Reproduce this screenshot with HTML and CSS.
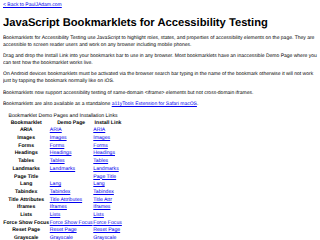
FILE: index.html
```html
<!DOCTYPE html>
<html lang="en">
<head>
<meta charset="utf-8">
<title>JavaScript Bookmarklets for Accessibility Testing</title>
<link rel="stylesheet" href="styles.css">
</head>
<body>
<div class="back"><a href="#">&lt; Back to PaulJAdam.com</a></div>
<h1>JavaScript Bookmarklets for Accessibility Testing</h1>
<p>Bookmarklets for Accessibility Testing use JavaScript to highlight roles, states, and properties of accessibility elements on the page. They are accessible to screen reader users and work on any browser including mobile phones.</p>
<p>Drag and drop the Install Link into your bookmarks bar to use in any browser. Most bookmarklets have an inaccessible Demo Page where you can test how the bookmarklet works live.</p>
<p>On Android devices bookmarklets must be activated via the browser search bar typing in the name of the bookmark otherwise it will not work just by tapping the bookmark normally like on iOS.</p>
<p>Bookmarklets now support accessibility testing of same-domain &lt;iframe&gt; elements but not cross-domain iframes.</p>
<p>Bookmarklets are also available as a standalone <a href="#">a11yTools Extension for Safari macOS</a>.</p>
<table class="links">
<caption>Bookmarklet Demo Pages and Installation Links</caption>
<thead>
<tr><th>Bookmarklet</th><th>Demo Page</th><th>Install Link</th></tr>
</thead>
<tbody>
<tr><th>ARIA</th><td><a href="#">ARIA</a></td><td><a href="#">ARIA</a></td></tr>
<tr><th>Images</th><td><a href="#">Images</a></td><td><a href="#">Images</a></td></tr>
<tr><th>Forms</th><td><a href="#">Forms</a></td><td><a href="#">Forms</a></td></tr>
<tr><th>Headings</th><td><a href="#">Headings</a></td><td><a href="#">Headings</a></td></tr>
<tr><th>Tables</th><td><a href="#">Tables</a></td><td><a href="#">Tables</a></td></tr>
<tr><th>Landmarks</th><td><a href="#">Landmarks</a></td><td><a href="#">Landmarks</a></td></tr>
<tr><th>Page Title</th><td></td><td><a href="#">Page Title</a></td></tr>
<tr><th>Lang</th><td><a href="#">Lang</a></td><td><a href="#">Lang</a></td></tr>
<tr><th>Tabindex</th><td><a href="#">Tabindex</a></td><td><a href="#">Tabindex</a></td></tr>
<tr><th>Title Attributes</th><td><a href="#">Title Attributes</a></td><td><a href="#">Title Attr</a></td></tr>
<tr><th>Iframes</th><td><a href="#">Iframes</a></td><td><a href="#">Iframes</a></td></tr>
<tr><th>Lists</th><td><a href="#">Lists</a></td><td><a href="#">Lists</a></td></tr>
<tr><th>Force Show Focus</th><td><a href="#">Force Show Focus</a></td><td><a href="#">Force Focus</a></td></tr>
<tr><th>Reset Page</th><td><a href="#">Reset Page</a></td><td><a href="#">Reset Page</a></td></tr>
<tr><th>Grayscale</th><td><a href="#">Grayscale</a></td><td><a href="#">Grayscale</a></td></tr>
<tr><th>Text Spacing</th><td><a href="#">Text Spacing</a></td><td><a href="#">Text Spacing</a></td></tr>
</tbody>
</table>
</body>
</html>
```
FILE: styles.css
```css
html {
  background: #fff;
}
body {
  margin: 1.5px 2px 1.5px 3px;
  font-family: "Liberation Sans", Arial, sans-serif;
  font-size: 5px;
  line-height: 7px;
  color: #000;
  text-rendering: geometricPrecision;
}
a {
  color: #0000ee;
}
.back {
  margin: 0;
}
h1 {
  font-size: 11.2px;
  line-height: 12.6px;
  margin: 8.3px 0 5.3px;
}
p {
  margin: 4.4px 0;
}
.links {
  border-spacing: 0.7px 0;
  line-height: 7.7px;
  font-size: 5.15px;
}
.links caption {
  line-height: 7px;
}
.links th,
.links td {
  padding: 0 0.35px;
}
.links th {
  text-align: center;
}
.links td {
  text-align: left;
}
```
